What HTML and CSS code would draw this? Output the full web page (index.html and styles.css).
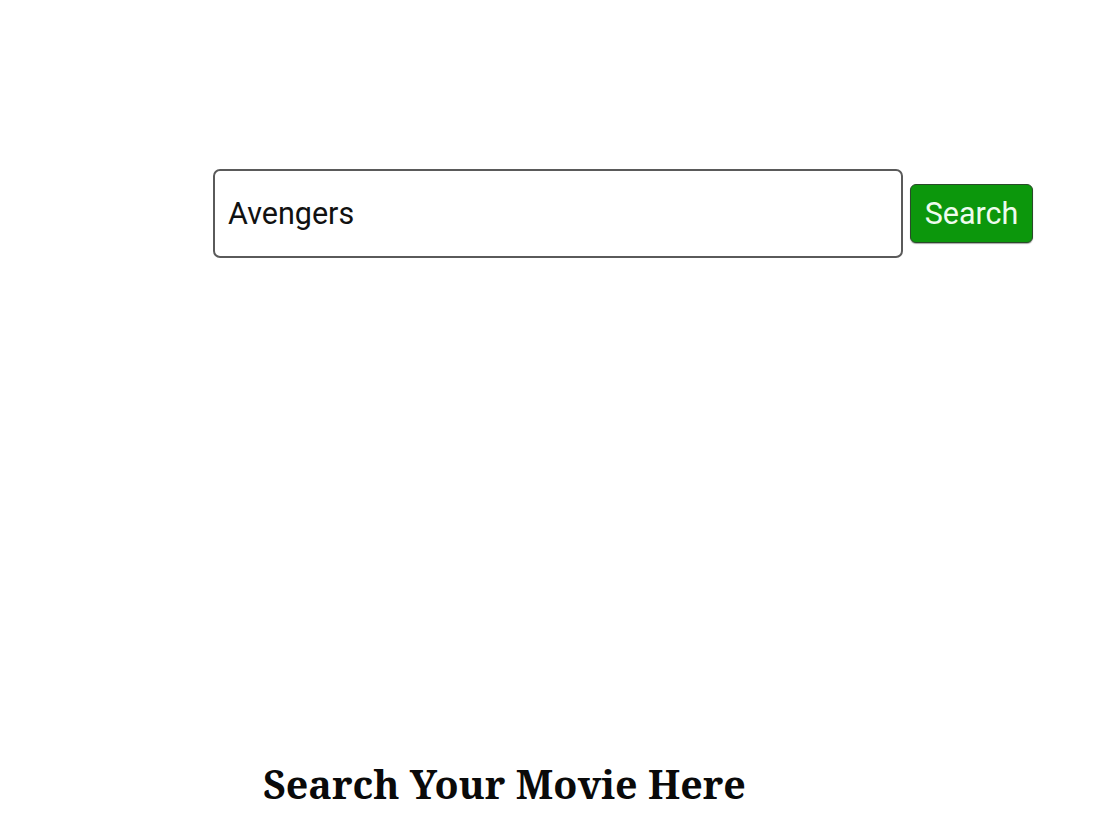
FILE: index.html
```html
<!DOCTYPE html>
<html>
<head>
<meta charset="utf-8">
<link rel="stylesheet" href="styles.css">
</head>
<body>
<div class="page">
  <form class="search-row">
    <input class="search-input" type="text" value="Avengers">
    <button class="search-btn" type="button">Search</button>
  </form>
  <h1 class="title">Search Your Movie Here</h1>
</div>
</body>
</html>
```
FILE: styles.css
```css
html, body { margin: 0; padding: 0; background: #ffffff; }
.page { width: 1100px; height: 826px; overflow: hidden; }
.search-row {
  display: flex;
  align-items: center;
  gap: 7px;
  margin: 0;
  padding: 169px 0 0 213px;
}
.search-input {
  box-sizing: border-box;
  width: 690px;
  height: 89px;
  border: 2px solid #5a5a5a;
  border-radius: 7px;
  padding: 0 13px;
  font-family: Roboto, sans-serif;
  font-size: 30.5px;
  color: #111;
  outline: none;
  background: #fff;
}
.search-btn {
  box-sizing: border-box;
  width: 123px;
  height: 59px;
  background: #0c970c;
  border: 1.5px solid #2a4a2a;
  border-radius: 6px;
  box-shadow: 0 1px 1px rgba(0,0,0,0.35);
  color: #eefcee;
  font-family: Roboto, sans-serif;
  font-size: 30.5px;
  padding: 0;
}
.title {
  margin: 507px 0 0 263px;
  font-family: "Noto Serif", "DejaVu Serif", serif;
  font-weight: bold;
  font-size: 39.4px;
  line-height: 1;
  color: #0a0a0a;
}
```
